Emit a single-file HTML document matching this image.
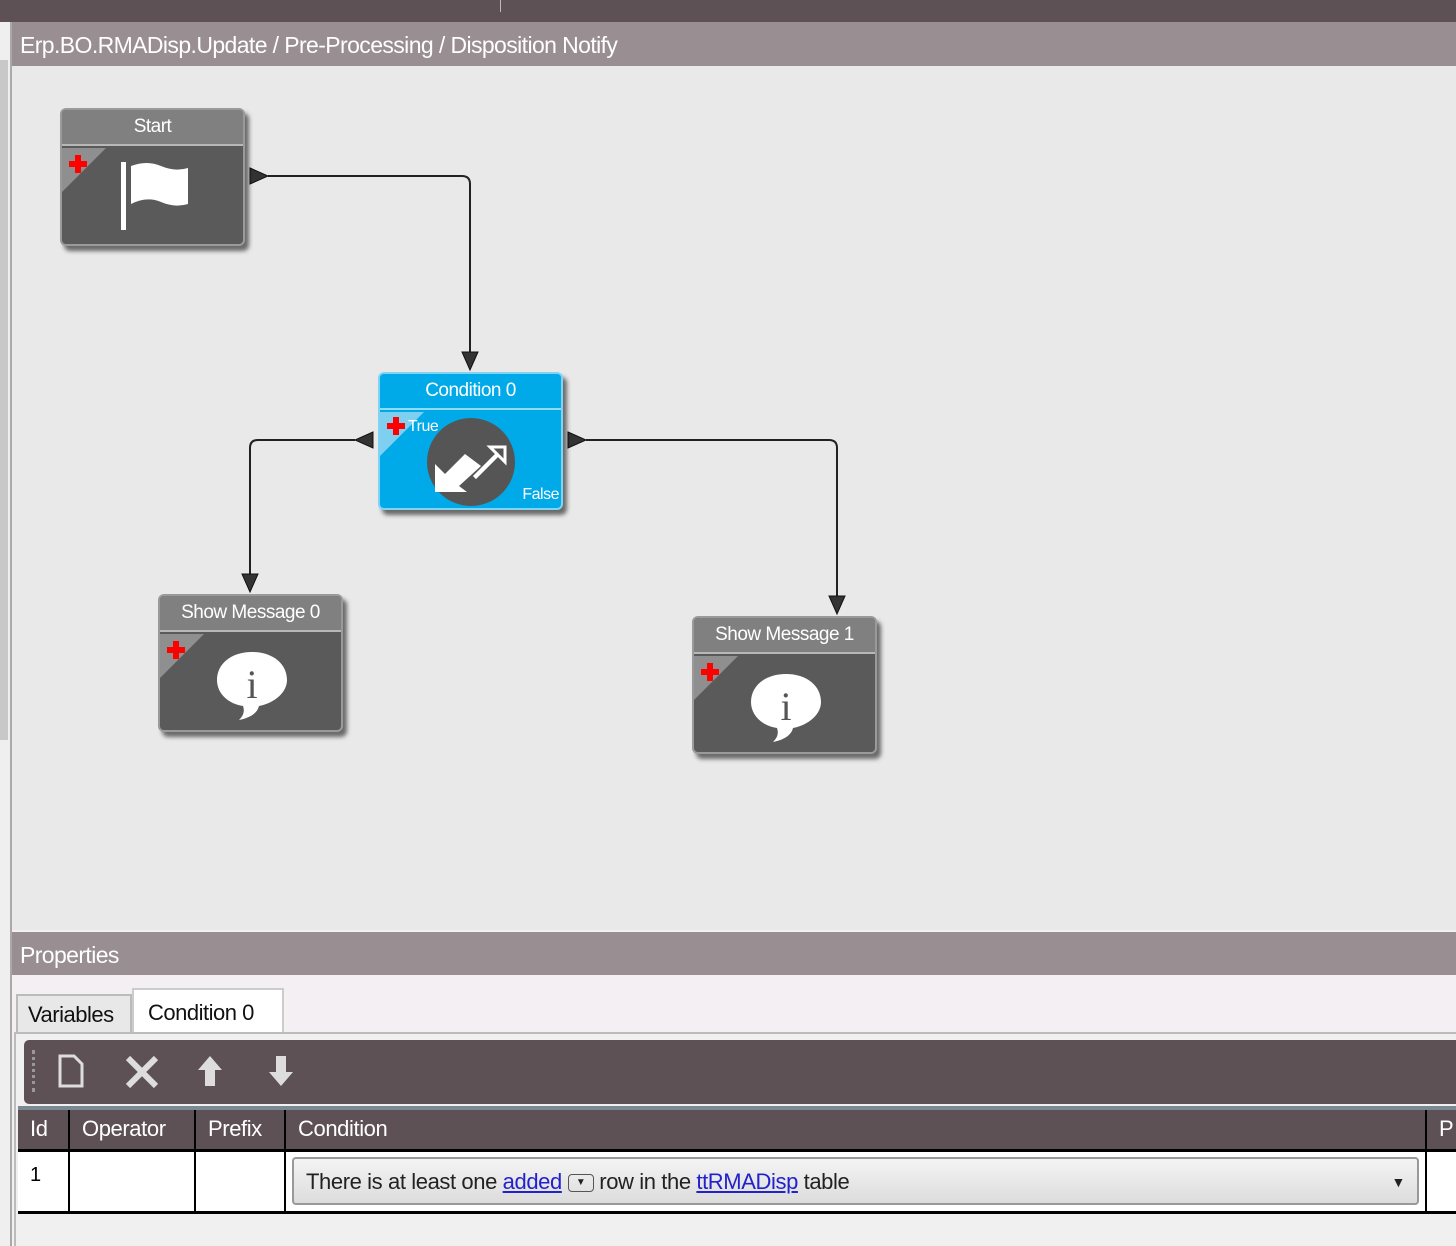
<!DOCTYPE html>
<html><head><meta charset="utf-8"><style>
*{margin:0;padding:0;box-sizing:border-box}
body{width:1456px;height:1246px;overflow:hidden;background:#e9e9e9;font-family:"Liberation Sans",sans-serif;position:relative}
.a{position:absolute}
.node{position:absolute;width:185px;height:138px;background:#5a5a5a;border:2px solid #9a9a9a;border-radius:6px;box-shadow:4px 5px 4px rgba(0,0,0,.55);overflow:hidden}
.node .h{height:36px;background:#808080;border-bottom:2px solid #b8b8b8;color:#fff;font-size:19px;text-align:center;line-height:34px;letter-spacing:-0.5px}
.tri{position:absolute;left:0;top:38px;width:0;height:0;border-top:44px solid #8f8f8f;border-right:44px solid transparent}
.plus{position:absolute;left:5px;top:43px}
th,td{border-right:2px solid #000}
</style></head><body>
<div class="a" style="left:0;top:0;width:1456px;height:22px;background:#5d5156"></div>
<div class="a" style="left:500px;top:0;width:1px;height:12px;background:#bbb"></div>
<div class="a" style="left:0;top:22px;width:10px;height:1224px;background:#efefef"></div>
<div class="a" style="left:0;top:60px;width:8px;height:680px;background:#c8c8c8"></div>
<div class="a" style="left:10px;top:22px;width:2px;height:1224px;background:#a9a9a9"></div>
<div class="a" style="left:12px;top:22px;width:1444px;height:44px;background:#998e91;color:#fff;font-size:23px;line-height:46px;padding-left:8px;letter-spacing:-0.6px">Erp.BO.RMADisp.Update / Pre-Processing / Disposition Notify</div>

<svg class="a" style="left:0;top:0" width="1456" height="930">
<g fill="none" stroke="#222" stroke-width="2">
<path d="M268 176 H462 Q470 176 470 184 V354"/>
<path d="M355 440 H258 Q250 440 250 448 V576"/>
<path d="M586 440 H829 Q837 440 837 448 V598"/>
</g>
<g fill="#333" stroke="#111">
<path d="M250 168 L268 176 L250 184Z"/>
<path d="M462 352 L478 352 L470 370Z"/>
<path d="M242 574 L258 574 L250 592Z"/>
<path d="M829 596 L845 596 L837 614Z"/>
<path d="M373 432 L355 440 L373 448Z"/>
<path d="M568 432 L586 440 L568 448Z"/>
</g>
</svg>

<div class="node" style="left:60px;top:108px"><div class="h">Start</div><div class="tri"></div><svg class="plus" width="22" height="22"><path d="M8 2H14V8H20V14H14V20H8V14H2V8H8Z" fill="#f00"/></svg>
<svg class="a" style="left:55px;top:50px" width="75" height="75"><rect x="4" y="2" width="5" height="68" fill="#fff"/><path d="M14 6 Q30 0 44 6 Q58 12 71 8 V44 Q58 48 44 42 Q30 36 14 44Z" fill="#fff"/></svg></div>

<div class="node" style="left:378px;top:372px;background:#00aae8;border-color:#7fd4f3"><div class="h" style="background:#00aae8;border-bottom-color:#8fdcf7">Condition 0</div><div class="tri" style="border-top-color:#7fd0f0"></div><svg class="plus" style="top:41px" width="22" height="22"><path d="M8 2H14V8H20V14H14V20H8V14H2V8H8Z" fill="#f00"/></svg>
<div class="a" style="left:28px;top:44px;color:#fff;font-size:16px;letter-spacing:-0.5px">True</div>
<div class="a" style="right:2px;bottom:4px;color:#fff;font-size:16px;letter-spacing:-0.5px">False</div>
<svg class="a" style="left:45px;top:42px" width="92" height="92"><circle cx="46" cy="46" r="44" fill="#555"/><path d="M10 76 V48 L20 58 L40 38 L56 50 L34 70 L42 76Z" fill="#fff"/><path d="M50 60 L72 38 L65 31 H80 V46 L73 39 L51 61Z" fill="none" stroke="#fff" stroke-width="3"/></svg></div>

<div class="node" style="left:158px;top:594px"><div class="h">Show Message 0</div><div class="tri"></div><svg class="plus" width="22" height="22"><path d="M8 2H14V8H20V14H14V20H8V14H2V8H8Z" fill="#f00"/></svg>
<svg class="a" style="left:55px;top:52px" width="75" height="75"><path d="M37 4 C16 4 2 16 2 32 C2 46 14 56 28 58 C30 64 28 68 24 72 C34 70 42 66 44 58 C60 55 72 44 72 32 C72 16 58 4 37 4Z" fill="#fff"/><text x="37" y="50" font-family="Liberation Serif" font-size="40" text-anchor="middle" fill="#555">i</text></svg></div>

<div class="node" style="left:692px;top:616px"><div class="h">Show Message 1</div><div class="tri"></div><svg class="plus" width="22" height="22"><path d="M8 2H14V8H20V14H14V20H8V14H2V8H8Z" fill="#f00"/></svg>
<svg class="a" style="left:55px;top:52px" width="75" height="75"><path d="M37 4 C16 4 2 16 2 32 C2 46 14 56 28 58 C30 64 28 68 24 72 C34 70 42 66 44 58 C60 55 72 44 72 32 C72 16 58 4 37 4Z" fill="#fff"/><text x="37" y="50" font-family="Liberation Serif" font-size="40" text-anchor="middle" fill="#555">i</text></svg></div>

<div class="a" style="left:12px;top:930px;width:1444px;height:316px;background:#f3eff3"></div>
<div class="a" style="left:12px;top:932px;width:1444px;height:43px;background:#998e91;color:#fff;font-size:23px;line-height:46px;padding-left:8px;letter-spacing:-0.6px">Properties</div>
<div class="a" style="left:16px;top:994px;width:116px;height:38px;background:#e8e8e8;border:2px solid #bbb;border-bottom:none;font-size:22px;line-height:38px;padding-left:10px;color:#111;letter-spacing:-0.5px">Variables</div>
<div class="a" style="left:132px;top:988px;width:152px;height:46px;background:#fff;border:2px solid #ccc;border-bottom:none;font-size:22px;line-height:46px;padding-left:14px;color:#111;letter-spacing:-0.5px">Condition 0</div>
<div class="a" style="left:14px;top:1032px;width:1442px;height:2px;background:#bbb"></div>
<div class="a" style="left:14px;top:1034px;width:2px;height:212px;background:#bbb"></div>
<div class="a" style="left:16px;top:1034px;width:1440px;height:212px;background:#f0f0f0"></div>
<div class="a" style="left:24px;top:1040px;width:1432px;height:64px;background:#5d5156;border-radius:5px 0 0 5px"></div>
<div class="a" style="left:32px;top:1050px;width:3px;height:42px;border-left:3px dotted #999"></div>
<svg class="a" style="left:50px;top:1050px" width="250" height="44">
<path d="M10 6 H24 L32 14 V36 H10Z" fill="none" stroke="#ddd" stroke-width="3"/>
<path d="M78 8 L92 22 L78 36 M106 8 L92 22 L106 36 M78 8 L106 36 M106 8 L78 36" stroke="#ddd" stroke-width="6" fill="none"/>
<path d="M160 6 L172 20 H165 V36 H155 V20 H148Z" fill="#ddd"/>
<path d="M231 36 L243 22 H236 V6 H226 V22 H219Z" fill="#ddd"/>
</svg>
<div class="a" style="left:18px;top:1106px;width:1438px;height:4px;background:#7c8993"></div>
<table class="a" style="left:18px;top:1110px;width:1438px;border-collapse:collapse;font-size:22px;letter-spacing:-0.4px">
<tr style="background:#5d5156;color:#fff;height:40px;text-align:left"><th style="width:51px;padding-left:12px;font-weight:normal">Id</th><th style="width:126px;padding-left:12px;font-weight:normal">Operator</th><th style="width:90px;padding-left:12px;font-weight:normal">Prefix</th><th style="width:1141px;padding-left:12px;font-weight:normal">Condition</th><th style="border:none;padding-left:12px;font-weight:normal">P</th></tr>
<tr style="background:#fff;height:62px;border-top:3px solid #000;border-bottom:3px solid #000"><td style="vertical-align:top;padding:12px 0 0 12px;font-size:20px">1</td><td></td><td></td>
<td style="padding:0 6px"><div style="height:48px;border:2px solid #999;border-radius:4px;background:linear-gradient(#f4f4f4,#dcdcdc);font-size:22px;line-height:46px;padding-left:12px;position:relative;color:#222">There is at least one <span style="color:#22c;text-decoration:underline">added</span> <span style="display:inline-block;width:26px;height:18px;border:1px solid #555;border-radius:4px;vertical-align:middle;font-size:10px;line-height:16px;text-align:center">▼</span> row in the <span style="color:#22c;text-decoration:underline">ttRMADisp</span> table<span style="position:absolute;right:12px;top:0;font-size:14px">▼</span></div></td><td style="border:none"></td></tr>
</table>
</body></html>
